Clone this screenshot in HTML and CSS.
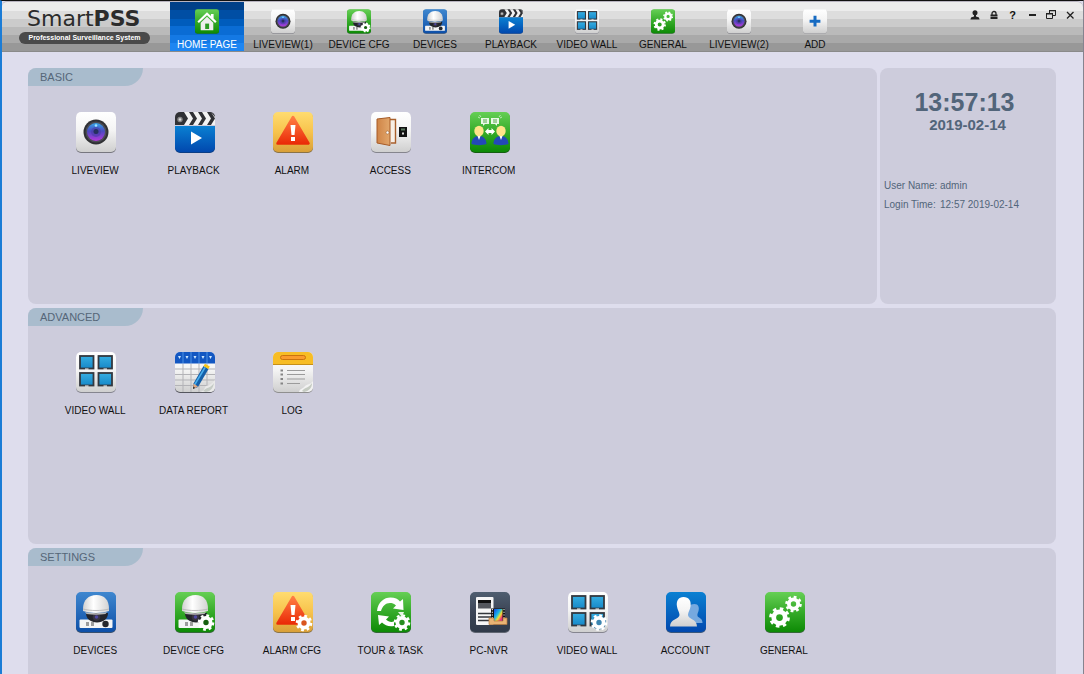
FILE: index.html
```html
<!DOCTYPE html>
<html lang="en">
<head>
<meta charset="utf-8">
<title>SmartPSS</title>
<link rel="stylesheet" href="styles.css">
</head>
<body>
<svg class="sprite" width="0" height="0" aria-hidden="true">
  <defs>
    <linearGradient id="gWhite" x1="0" y1="0" x2="0" y2="1"><stop offset="0" stop-color="#fff"/><stop offset=".45" stop-color="#f4f4f4"/><stop offset="1" stop-color="#cfcfcf"/></linearGradient>
    <linearGradient id="gGreen" x1="0" y1="0" x2="0" y2="1"><stop offset="0" stop-color="#66cf55"/><stop offset=".5" stop-color="#35ab29"/><stop offset="1" stop-color="#0d8a05"/></linearGradient>
    <linearGradient id="gBlue" x1="0" y1="0" x2="0" y2="1"><stop offset="0" stop-color="#0a80d2"/><stop offset="1" stop-color="#0148ae"/></linearGradient>
    <linearGradient id="gSteel" x1="0" y1="0" x2="0" y2="1"><stop offset="0" stop-color="#3f87cf"/><stop offset="1" stop-color="#0d4fa8"/></linearGradient>
    <linearGradient id="gAmber" x1="0" y1="0" x2="0" y2="1"><stop offset="0" stop-color="#ffdc70"/><stop offset=".5" stop-color="#f7c34c"/><stop offset="1" stop-color="#d9a038"/></linearGradient>
    <linearGradient id="gRed" x1="0" y1="0" x2="0" y2="1"><stop offset="0" stop-color="#ff7d42"/><stop offset="1" stop-color="#ea2c08"/></linearGradient>
    <linearGradient id="gSlate" x1="0" y1="0" x2="0" y2="1"><stop offset="0" stop-color="#4f5e70"/><stop offset=".5" stop-color="#3c4556"/><stop offset="1" stop-color="#303a49"/></linearGradient>
    <linearGradient id="gScreen" x1="0" y1="0" x2="0" y2="1"><stop offset="0" stop-color="#36aee2"/><stop offset="1" stop-color="#1688c8"/></linearGradient>
    <linearGradient id="gLens" x1="0" y1="0" x2="0" y2="1"><stop offset="0" stop-color="#36a5e8"/><stop offset=".45" stop-color="#4a4ac0"/><stop offset="1" stop-color="#b438dc"/></linearGradient>
    <linearGradient id="gDome" x1="0" y1="0" x2="1" y2="0"><stop offset="0" stop-color="#d0d0d0"/><stop offset=".4" stop-color="#fff"/><stop offset="1" stop-color="#d2d2d2"/></linearGradient>
    <linearGradient id="gDoor" x1="0" y1="0" x2="1" y2="0"><stop offset="0" stop-color="#cf8446"/><stop offset="1" stop-color="#e2a76c"/></linearGradient>
    <linearGradient id="gFilm" x1="0" y1="0" x2="1" y2="1"><stop offset="0" stop-color="#1440e0"/><stop offset=".4" stop-color="#18b8e8"/><stop offset=".6" stop-color="#f0e030"/><stop offset=".8" stop-color="#f03070"/><stop offset="1" stop-color="#a020d0"/></linearGradient>

    <g id="gear" fill="none" stroke="#fff">
      <circle r="4.6" stroke-width="3.8"/>
      <circle r="7" stroke-width="2.6" stroke-dasharray="2.75 2.75"/>
    </g>
    <g id="screens">
      <rect y="1" width="40" height="40" rx="5" fill="#85858f"/>
      <rect width="40" height="40" rx="5" fill="url(#gWhite)"/>
      <g fill="url(#gScreen)" stroke="#33383f" stroke-width="1.8">
        <rect x="4" y="4" width="13.5" height="12.5"/><rect x="22.500" y="4" width="13.5" height="12.5"/>
        <rect x="4" y="21" width="13.5" height="12.5"/><rect x="22.500" y="21" width="13.5" height="12.5"/>
      </g>
      <path d="M9 17h3.500M27.500 17h3.500M9 34h3.500M27.500 34h3.500" stroke="#fff" stroke-width="1"/>
    </g>
    <g id="camera">
      <rect x="3.500" y="27.500" width="33" height="8.500" rx="1" fill="#f5f5f5"/>
      <path d="M10 31h3M15 31h3M10 33h3M15 33h3" stroke="#444" stroke-width="1.200"/>
      <circle cx="29.500" cy="32" r="3.200" fill="#26282c"/>
      <path d="M10 21h22c0 6-5 9.500-11 9.500S10 27 10 21z" fill="#23242a"/>
      <circle cx="20.500" cy="25" r="3.800" fill="#38343f"/><circle cx="20.500" cy="25" r="1.800" fill="#4f48a0"/>
      <path d="M7 17c0-9 5.500-14 13.500-14S33 8 33 17v2c-7 2.500-19 2.500-26 0z" fill="url(#gDome)"/>
      <path d="M7 17c7 2 19 2 26 0" fill="none" stroke="#b0b0b0" stroke-width=".8"/>
      <path d="M9 20c6 1.500 16 1.500 22 0l-1.500 2c-6 1-13 1-19 0z" fill="#b8b8b8"/>
    </g>
    <g id="warning">
      <path d="M20 5l15.500 26.500h-31z" fill="url(#gRed)" stroke="url(#gRed)" stroke-width="2.500" stroke-linejoin="round"/>
      <path d="M17.500 13h5l-1 10h-3z" fill="#fff"/><rect x="18" y="25" width="4" height="4" fill="#fff"/>
    </g>
  </defs>
  <symbol id="i-home" viewBox="0 0 40 41">
    <rect y="1" width="40" height="40" rx="4" fill="#177014"/><rect width="40" height="40" rx="4" fill="url(#gGreen)"/>
    <path d="M20 5L4 20.500l2.500 2.500L20 10l13.500 13 2.500-2.500-5-5V8h-4.500v3.500z" fill="#fff"/>
    <path d="M20 12.500L9.500 22.500V35h21V22.500z" fill="#eee"/><rect x="17" y="24" width="6.500" height="9" fill="#2c9c24"/>
  </symbol>
  <symbol id="i-live" viewBox="0 0 40 41">
    <rect y="1" width="40" height="40" rx="5" fill="#77777f"/><rect width="40" height="40" rx="5" fill="url(#gWhite)"/>
    <circle cx="20" cy="20" r="12.500" fill="#303134"/><circle cx="20" cy="20" r="10.500" fill="#4b4c55"/><circle cx="20" cy="20" r="9" fill="url(#gLens)"/>
    <circle cx="20" cy="20" r="5" fill="#4b3ba6" opacity=".6"/><circle cx="20" cy="19.500" r="2.500" fill="#26305f"/><circle cx="20" cy="13.500" r="1.300" fill="#9de6ff"/>
  </symbol>
  <symbol id="i-play" viewBox="0 0 40 41">
    <path d="M0 14h40v22a5 5 0 0 1-5 5H5a5 5 0 0 1-5-5z" fill="#0b3d84"/>
    <path d="M0 14h40v21a5 5 0 0 1-5 5H5a5 5 0 0 1-5-5z" fill="url(#gBlue)"/>
    <path d="M5 0h30a5 5 0 0 1 5 5v8H0V5a5 5 0 0 1 5-5z" fill="#303135"/>
    <path d="M9 0h5l4 6.500h-5zM18 0h5l4 6.500h-5zM27 0h5l4 6.500h-5zM36 0l4 5v1.500zM13 6.500h5L14 13H9zM22 6.500h5L23 13h-5zM31 6.500h5L32 13h-5zM40 6.500V13h-4z" fill="#f3f3f3"/>
    <circle cx="5" cy="7.500" r="2.700" fill="#888"/><circle cx="5" cy="7.500" r="1.200" fill="#ddd"/>
    <path d="M16 19.500v13L27 26z" fill="#fff"/>
  </symbol>
  <symbol id="i-alarm" viewBox="0 0 40 41">
    <rect y="1" width="40" height="40" rx="5" fill="#8b7345"/><rect width="40" height="40" rx="5" fill="url(#gAmber)"/><use href="#warning"/>
  </symbol>
  <symbol id="i-alarmcfg" viewBox="0 0 40 41">
    <rect y="1" width="40" height="40" rx="5" fill="#8b7345"/><rect width="40" height="40" rx="5" fill="url(#gAmber)"/><use href="#warning"/>
    <circle cx="31" cy="31" r="5" fill="#d9551e"/><use href="#gear" x="31" y="31"/>
  </symbol>
  <symbol id="i-access" viewBox="0 0 40 41">
    <rect y="1" width="40" height="40" rx="5" fill="#85858d"/><rect width="40" height="40" rx="5" fill="url(#gWhite)"/>
    <path d="M8 7.500h16.500V31H20" fill="#f7efe6" stroke="#a9602c" stroke-width="1.400"/>
    <path d="M6 7l13-1.500v28L6 31z" fill="url(#gDoor)" stroke="#a65b27" stroke-width="1"/><circle cx="16.500" cy="20.500" r="1.500" fill="#fff" stroke="#8b5529" stroke-width=".5"/>
    <rect x="28" y="15" width="8" height="10" fill="#111"/><rect x="30" y="16.500" width="4" height="2" fill="#59785e"/><rect x="31" y="20.500" width="2" height="2" fill="#ddd"/>
  </symbol>
  <symbol id="i-intercom" viewBox="0 0 40 41">
    <rect y="1" width="40" height="40" rx="5" fill="#145f10"/><rect width="40" height="40" rx="5" fill="url(#gGreen)"/>
    <path d="M11 6h8v6h-4l-2 2v-2h-2zM21 6h8v6h-2v2l-2-2h-4z" fill="#e9f8e6"/>
    <path d="M13 8h4M13 10h4M23 8h4M23 10h4" stroke="#4a9c40" stroke-width=".9"/>
    <path d="M8 5l2 1M9.500 3l1.500 2M32 5l-2 1M30.500 3L29 5" stroke="#d6f0d0" stroke-width=".8"/>
    <path d="M1.500 32c0-5 3-8 7.500-8s7.500 3 7.500 8c-4 1.500-11 1.500-15 0zM23.500 32c0-5 3-8 7.500-8s7.500 3 7.500 8c-4 1.500-11 1.500-15 0z" fill="#2349b8"/>
    <path d="M7.500 24h3L9 28zM29.500 24h3L31 28z" fill="#fff"/>
    <ellipse cx="9" cy="19" rx="4.700" ry="5.300" fill="#ffe48a"/><ellipse cx="31" cy="19" rx="4.700" ry="5.300" fill="#ffe48a"/>
    <path d="M15 19.500l3.500-3.500v2h3v-2l3.500 3.500-3.500 3.500v-2h-3v2z" fill="#fff"/>
  </symbol>
  <symbol id="i-wall" viewBox="0 0 40 41"><use href="#screens"/></symbol>
  <symbol id="i-wallcfg" viewBox="0 0 40 41">
    <use href="#screens"/>
    <circle cx="31" cy="30.500" r="7" fill="#3c85b0"/>
    <use href="#gear" x="31" y="30.500"/>
  </symbol>
  <symbol id="i-report" viewBox="0 0 40 41">
    <rect y="1" width="40" height="40" rx="5" fill="#55565e"/><rect width="40" height="40" rx="5" fill="url(#gWhite)"/>
    <path d="M5 0h30a5 5 0 0 1 5 5v6.500H0V5a5 5 0 0 1 5-5z" fill="#1357c2"/>
    <path d="M8 0v11M16 0v11M24 0v11M32 0v11" stroke="#5aa1ee" stroke-width=".8"/>
    <path d="M3 4h3L4.500 7zM10.500 4h3L12 7zM18.500 4h3L20 7zM26.500 4h3L28 7zM34 4h3l-1.500 3z" fill="#cde8ff"/>
    <path d="M0 17h40M0 22.500h40M0 28h40M0 33.500h40M8 12v28M16 12v28M24 12v28M32 12v28" stroke="#b3b3b7" stroke-width="1"/>
    <path d="M25 40c4-1 4-3 6-6 3-1 6-2 9-6v8a5 5 0 0 1-4 4z" fill="#e9e9e9"/><path d="M28 39c4-4 8-3 11-8-1 5-3 8-8 9z" fill="#c5cbc5"/>
    <path d="M28.500 14l5 3-10.500 18-4.800 2 .3-5.500z" fill="#155fa8"/><path d="M30 15.500L19.500 33" stroke="#4ab0ef" stroke-width="1.500"/>
    <path d="M28.500 14l1.500-2.300 4.800 2.900-1.500 2.400z" fill="#f8c516"/><path d="M18.400 31.500l4.600 3-4.800 2.500z" fill="#e1a77f"/><path d="M18.300 34.500l1.700 1.300-1.900 1.200z" fill="#222"/>
  </symbol>
  <symbol id="i-log" viewBox="0 0 40 41">
    <rect y="1" width="40" height="40" rx="5" fill="#8f8f8f"/><rect width="40" height="40" rx="5" fill="url(#gWhite)"/>
    <path d="M5 0h30a5 5 0 0 1 5 5v7.500H0V5a5 5 0 0 1 5-5z" fill="#f7bd25"/><path d="M0 12.500h40" stroke="#c58f19" stroke-width="1"/>
    <rect x="7.500" y="3.500" width="25" height="4" rx="2" fill="#fa9b2c" stroke="#cb730d"/>
    <path d="M14 18.500h18M14 22.500h18M14 27h18M14 31.500h13" stroke="#9b9b9b" stroke-width="1"/>
    <path d="M7.500 18.500h2.500M7.500 22.500h2.500M7.500 27h2.500M7.500 31.500h2.500" stroke="#858585" stroke-width="2"/>
    <path d="M26 40c1-4 4-3 6-6 2-2 5-1 8-5v6a5 5 0 0 1-5 5z" fill="#f2f2f2"/><path d="M29 39c3-4 7-3 10-8 0 5-3 8-8 9z" fill="#c5cbc2"/>
  </symbol>
  <symbol id="i-device" viewBox="0 0 40 41">
    <rect y="1" width="40" height="40" rx="5" fill="#38506e"/><rect width="40" height="40" rx="5" fill="url(#gSteel)"/><use href="#camera"/>
  </symbol>
  <symbol id="i-devicecfg" viewBox="0 0 40 41">
    <rect y="1" width="40" height="40" rx="5" fill="#36683a"/><rect width="40" height="40" rx="5" fill="url(#gGreen)"/><use href="#camera"/>
    <circle cx="31" cy="30.500" r="5" fill="#165f10"/><use href="#gear" x="31" y="30.500"/>
  </symbol>
  <symbol id="i-tour" viewBox="0 0 40 41">
    <rect y="1" width="40" height="40" rx="5" fill="#356738"/><rect width="40" height="40" rx="5" fill="url(#gGreen)"/>
    <path d="M6 19C7 10 13 5.500 19.500 5.500c4.500 0 7.500 1.500 9.500 4l3-2.500.5 11-10.500-1.500 3-3C23 11.500 21 11 19 11c-4.500 0-7.500 3-9 8z" fill="#fff"/>
    <path d="M7 23l11 1.500-3 3c2 2 5 3 8 2v4.500c-5 1-9-.5-12-3.500L8 33z" fill="#fff"/>
    <path d="M27 20h6l-2 5z" fill="#e9f6e6"/><circle cx="31" cy="30.500" r="5" fill="#278d20"/><use href="#gear" x="31" y="30.500"/>
  </symbol>
  <symbol id="i-nvr" viewBox="0 0 40 41">
    <rect y="1" width="40" height="40" rx="5" fill="#606672"/><rect width="40" height="40" rx="5" fill="url(#gSlate)"/>
    <rect x="6" y="5" width="17.500" height="28" rx="1" fill="#f6f6f6"/><rect x="8" y="8" width="13" height="8.500" fill="#55585e"/><path d="M8 9.500h13" stroke="#111" stroke-width="3"/>
    <path d="M8 21.500h13M8 25h13M8 28.500h13" stroke="#33363b" stroke-width="1.500"/>
    <rect x="21" y="16.500" width="14" height="13" fill="#111"/><rect x="24" y="17" width="8.500" height="13" fill="url(#gFilm)"/>
    <path d="M22.300 17v12M34 17v12" stroke="#fff" stroke-width="1" stroke-dasharray="1.200 1.500"/>
    <path d="M19 26h5v3h9v-3h4v6.500H19z" fill="#e9b374" stroke="#b77a3d" stroke-width=".7"/>
  </symbol>
  <symbol id="i-account" viewBox="0 0 40 41">
    <rect y="1" width="40" height="40" rx="5" fill="#39577c"/><rect width="40" height="40" rx="5" fill="url(#gBlue)"/>
    <path d="M28.500 12c4 0 5 3.500 4 7-.5 2-1.500 3-1 5 1 2 5 2 5 7H22V15c1-2 4-3 6.500-3z" fill="#76a9df"/>
    <path d="M17.500 5c5.500 0 8 4 7 9.500-.5 3.500-2.500 5.500-2.500 8.500 0 4 9 4 9 11.500H4C4 27 13.500 27 13.500 23c0-3-2-5-2.500-8.500C10 9 12.500 5 17.500 5z" fill="url(#gWhite)"/>
  </symbol>
  <symbol id="i-general" viewBox="0 0 40 41">
    <rect y="1" width="40" height="40" rx="5" fill="#356838"/><rect width="40" height="40" rx="5" fill="url(#gGreen)"/>
    <g transform="translate(14.500 25.500) scale(1.250)"><use href="#gear"/></g><use href="#gear" x="28.500" y="12"/>
  </symbol>
  <symbol id="i-add" viewBox="0 0 40 41">
    <rect y="1" width="40" height="40" rx="5" fill="#9b9ba0"/><rect width="40" height="40" rx="5" fill="url(#gWhite)"/>
    <path d="M20 11v18M11 20h18" stroke="#176bc2" stroke-width="5"/>
  </symbol>
</svg>

<div class="app">
  <header class="topbar">
    <div class="brand">
      <div class="brand-name">Smart<b>PSS</b></div>
      <div class="brand-tag">Professional Surveillance System</div>
    </div>
    <nav class="tabs">
      <button class="tab active"><svg class="tab-icon"><use href="#i-home"/></svg>HOME PAGE</button>
      <button class="tab"><svg class="tab-icon"><use href="#i-live"/></svg>LIVEVIEW(1)</button>
      <button class="tab"><svg class="tab-icon"><use href="#i-devicecfg"/></svg>DEVICE CFG</button>
      <button class="tab"><svg class="tab-icon"><use href="#i-device"/></svg>DEVICES</button>
      <button class="tab"><svg class="tab-icon"><use href="#i-play"/></svg>PLAYBACK</button>
      <button class="tab"><svg class="tab-icon"><use href="#i-wall"/></svg>VIDEO WALL</button>
      <button class="tab"><svg class="tab-icon"><use href="#i-general"/></svg>GENERAL</button>
      <button class="tab"><svg class="tab-icon"><use href="#i-live"/></svg>LIVEVIEW(2)</button>
      <button class="tab"><svg class="tab-icon"><use href="#i-add"/></svg>ADD</button>
    </nav>
    <div class="window-tools">
      <button class="tool" aria-label="User"><svg viewBox="0 0 12 12"><circle cx="6" cy="3.700" r="2.500"/><path d="M5 5h2v2.500l3 1V10H2V8.500l3-1z"/><path d="M1.500 10h9" stroke="#222"/></svg></button>
      <button class="tool" aria-label="Lock"><svg viewBox="0 0 12 12"><path d="M4 6V4.500a2 2 0 0 1 4 0V6" fill="none" stroke="#222" stroke-width="1.300"/><path d="M2.500 5.500h7V7h-7zM2.500 7.500h7V10h-7z"/></svg></button>
      <button class="tool help" aria-label="Help">?</button>
      <button class="tool" aria-label="Minimize"><svg viewBox="0 0 12 12"><rect x="3" y="5" width="7" height="2"/></svg></button>
      <button class="tool" aria-label="Restore"><svg viewBox="0 0 12 12"><path d="M4.500 4V1.500h6v5H8M1.500 4.500h6v5h-6z" fill="none" stroke="#222"/><path d="M1 4h7v1.500H1zM4 1h7v1.300H4z"/></svg></button>
      <button class="tool" aria-label="Close"><svg viewBox="0 0 12 12"><path d="M3 3l6.500 6.500M9.500 3L3 9.500" stroke="#222" stroke-width="1.300"/></svg></button>
    </div>
  </header>

  <main class="content">
    <div class="row">
      <section class="panel">
        <h2 class="panel-title">BASIC</h2>
        <div class="tiles">
          <button class="tile"><svg class="tile-icon"><use href="#i-live"/></svg>LIVEVIEW</button>
          <button class="tile"><svg class="tile-icon"><use href="#i-play"/></svg>PLAYBACK</button>
          <button class="tile"><svg class="tile-icon"><use href="#i-alarm"/></svg>ALARM</button>
          <button class="tile"><svg class="tile-icon"><use href="#i-access"/></svg>ACCESS</button>
          <button class="tile"><svg class="tile-icon"><use href="#i-intercom"/></svg>INTERCOM</button>
        </div>
      </section>
      <aside class="panel info">
        <div class="clock">13:57:13</div>
        <div class="date">2019-02-14</div>
        <dl class="session">
          <dt>User Name:</dt><dd>admin</dd>
          <dt>Login Time:</dt><dd>12:57 2019-02-14</dd>
        </dl>
      </aside>
    </div>
    <section class="panel">
      <h2 class="panel-title">ADVANCED</h2>
      <div class="tiles">
        <button class="tile"><svg class="tile-icon"><use href="#i-wall"/></svg>VIDEO WALL</button>
        <button class="tile"><svg class="tile-icon"><use href="#i-report"/></svg>DATA REPORT</button>
        <button class="tile"><svg class="tile-icon"><use href="#i-log"/></svg>LOG</button>
      </div>
    </section>
    <section class="panel">
      <h2 class="panel-title">SETTINGS</h2>
      <div class="tiles">
        <button class="tile"><svg class="tile-icon"><use href="#i-device"/></svg>DEVICES</button>
        <button class="tile"><svg class="tile-icon"><use href="#i-devicecfg"/></svg>DEVICE CFG</button>
        <button class="tile"><svg class="tile-icon"><use href="#i-alarmcfg"/></svg>ALARM CFG</button>
        <button class="tile"><svg class="tile-icon"><use href="#i-tour"/></svg>TOUR &amp; TASK</button>
        <button class="tile"><svg class="tile-icon"><use href="#i-nvr"/></svg>PC-NVR</button>
        <button class="tile"><svg class="tile-icon"><use href="#i-wallcfg"/></svg>VIDEO WALL</button>
        <button class="tile"><svg class="tile-icon"><use href="#i-account"/></svg>ACCOUNT</button>
        <button class="tile"><svg class="tile-icon"><use href="#i-general"/></svg>GENERAL</button>
      </div>
    </section>
  </main>
</div>
</body>
</html>
```

FILE: styles.css
```css
* {
  box-sizing: border-box;
}

body {
  margin: 0;
  font-family: "Liberation Sans", Arial, sans-serif;
  font-size: 10px;
  color: #111;
}

button {
  padding: 0;
  border: 0;
  background: none;
  font: inherit;
  color: inherit;
  cursor: pointer;
}

.sprite {
  display: block;
}

.app {
  display: flex;
  flex-direction: column;
  height: 100vh;
  border: solid;
  border-width: 1px 1px 0 2px;
  border-color: #111 #85838f #111 #1b7cd6;
  background: #dedded;
}

.topbar {
  display: flex;
  flex: none;
  border-top: 1px solid #b8b4c0;
  border-bottom: 1px solid #8a8a8a;
  border-radius: 5px 6px 0 0;
  background: linear-gradient(#ececec 0 18%, #dddddd 18% 34%, #cbcbcb 34% 51%, #bababa 51% 68%, #a9a9a9 68% 84%, #989898 84%);
}

.brand {
  flex: none;
  width: 168px;
  padding: 4px 0 0 17px;
}

.brand-name {
  padding-left: 8px;
  font: 22px/26px "DejaVu Sans", Verdana, sans-serif;
  color: #2c2c2c;
}

.brand-tag {
  width: 131px;
  border-radius: 6px;
  background: #4a4a4a;
  color: #fff;
  font-size: 7px;
  font-weight: bold;
  line-height: 12px;
  text-align: center;
  white-space: nowrap;
}

.tabs {
  display: flex;
  gap: 2px;
}

.tab {
  display: flex;
  flex-direction: column;
  align-items: center;
  gap: 5px;
  width: 74px;
  padding: 7px 0 0;
  line-height: 12px;
  white-space: nowrap;
}

.tab.active {
  color: #fff;
  background: linear-gradient(#004088 0 17%, #004ea4 17% 34%, #005cbc 34% 50%, #0a6cd4 50% 67%, #1479e4 67% 84%, #1e86f2 84%);
}

.tab-icon {
  width: 24px;
  height: 25px;
}

.window-tools {
  display: flex;
  align-items: flex-start;
  margin-left: auto;
  padding: 6px 4px 0 0;
}

.tool {
  display: grid;
  place-items: center;
  width: 19px;
  height: 14px;
}

.tool svg {
  width: 12px;
  height: 12px;
  fill: #222;
}

.help {
  font-size: 11px;
  font-weight: bold;
}

.content {
  display: flex;
  flex: 1;
  flex-direction: column;
  gap: 4px;
  min-height: 0;
  padding: 16px 27px 16px 26px;
  overflow-y: auto;
  scrollbar-width: none;
}

.row {
  display: flex;
  flex: none;
  gap: 3px;
}

.panel {
  flex: none;
  min-height: 236px;
  border-radius: 8px;
  background: #cdccdc;
}

.row .panel {
  flex: 1;
}

.panel-title {
  width: 115px;
  margin: 0;
  padding-left: 12px;
  border-radius: 8px 0 18px 0;
  background: #a9bccd;
  color: #556678;
  font-size: 11px;
  font-weight: normal;
  line-height: 18px;
}

.tiles {
  display: grid;
  grid-template-columns: repeat(8, 1fr);
  max-width: 805px;
  padding: 26px 0 0 18px;
}

.tile {
  display: flex;
  flex-direction: column;
  align-items: center;
  gap: 12px;
  line-height: 12px;
  white-space: nowrap;
}

.tile-icon {
  width: 40px;
  height: 41px;
  margin-left: 2px;
}

.row .info {
  flex: 0 0 176px;
  padding: 20px 11px 0 4px;
  color: #52657a;
}

.clock {
  font-size: 25px;
  font-weight: bold;
  line-height: 28px;
  text-align: center;
}

.date {
  padding-left: 6px;
  font-size: 15px;
  font-weight: bold;
  line-height: 18px;
  text-align: center;
}

.session {
  display: grid;
  grid-template-columns: 56px 1fr;
  margin: 42px 0 0;
  line-height: 19px;
}

.session dd {
  margin: 0;
}
```
